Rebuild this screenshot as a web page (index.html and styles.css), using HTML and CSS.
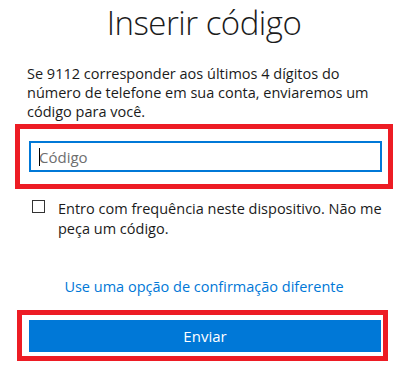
FILE: index.html
```html
<!DOCTYPE html>
<html>
<head>
  <meta charset="UTF-8">
  <title>Inserir código</title>
  <link rel="stylesheet" href="styles.css">
</head>
<body>
  <div class="page">
    <h1 class="title">Inserir código</h1>

    <p class="intro">Se 9112 corresponder aos últimos 4 dígitos do número de telefone em sua conta, enviaremos um código para você.</p>

    <!-- caixa vermelha em volta do campo -->
    <div class="mark mark-input">
      <div class="field">
        <input type="text" id="codeInput" class="code-input" placeholder="Código">
        <span class="caret"></span>
      </div>
    </div>

    <label class="remember" for="rememberBox">
      <input type="checkbox" id="rememberBox" class="remember-box">
      <span class="remember-text">Entro com frequência neste dispositivo. Não me peça um código.</span>
    </label>

    <div class="alt-row">
      <a href="#" class="alt-link">Use uma opção de confirmação diferente</a>
    </div>

    <!-- caixa vermelha em volta do botão -->
    <div class="mark mark-button">
      <button id="sendButton" class="send">Enviar</button>
    </div>
  </div>
</body>
</html>
```

FILE: styles.css
```css
body {
  margin: 0;
  background-color: #ffffff;
  color: #1b1b1b;
  font-family: 'Segoe UI', 'Open Sans', 'Noto Sans', sans-serif;
  font-size: 14.5px;
}

.page {
  width: 378px;
  margin-left: 15px;
}

.title {
  margin: 0;
  font-size: 33px;
  font-weight: 300;
  letter-spacing: -0.5px;
  line-height: 45px;
  text-align: center;
  color: #1b1b1b;
}

.intro {
  width: 345px;
  margin: 19px 0 0 12px;
  line-height: 19px;
}

/* caixas de destaque */
.mark {
  box-sizing: border-box;
  border: 5px solid #ed1c24;
}

.mark-input {
  width: 378px;
  margin-top: 3px;
  padding: 12px 5px 12px 9px;
}

.field {
  position: relative;
}

.code-input {
  box-sizing: border-box;
  display: block;
  width: 353px;
  height: 31px;
  margin: 0;
  padding: 0 8px;
  border: 2px solid #0078d7;
  outline: none;
  font-family: inherit;
  font-size: 15px;
  color: #1b1b1b;
}

.code-input::placeholder {
  color: #6e6e6e;
}

.caret {
  position: absolute;
  left: 10px;
  top: 7px;
  width: 1px;
  height: 18px;
  background-color: #000000;
}

.remember {
  display: flex;
  align-items: flex-start;
  margin: 10px 0 0 17px;
  line-height: 20px;
}

.remember-box {
  -webkit-appearance: none;
  appearance: none;
  box-sizing: border-box;
  flex: none;
  width: 13px;
  height: 13px;
  margin: 1px 13px 0 0;
  border: 1px solid #333333;
  background-color: #ffffff;
}

.remember-text {
  width: 325px;
}

.alt-row {
  margin-top: 38px;
  text-align: center;
  line-height: 20px;
}

.alt-link {
  color: #0078d7;
  text-decoration: none;
}

.mark-button {
  width: 371px;
  margin: 13px 0 0 2px;
  padding: 5px 2px 4px 7px;
}

.send {
  display: block;
  width: 352px;
  height: 32px;
  border: none;
  background-color: #0078d7;
  color: #ffffff;
  font-family: inherit;
  font-size: 15px;
  cursor: pointer;
}
```
